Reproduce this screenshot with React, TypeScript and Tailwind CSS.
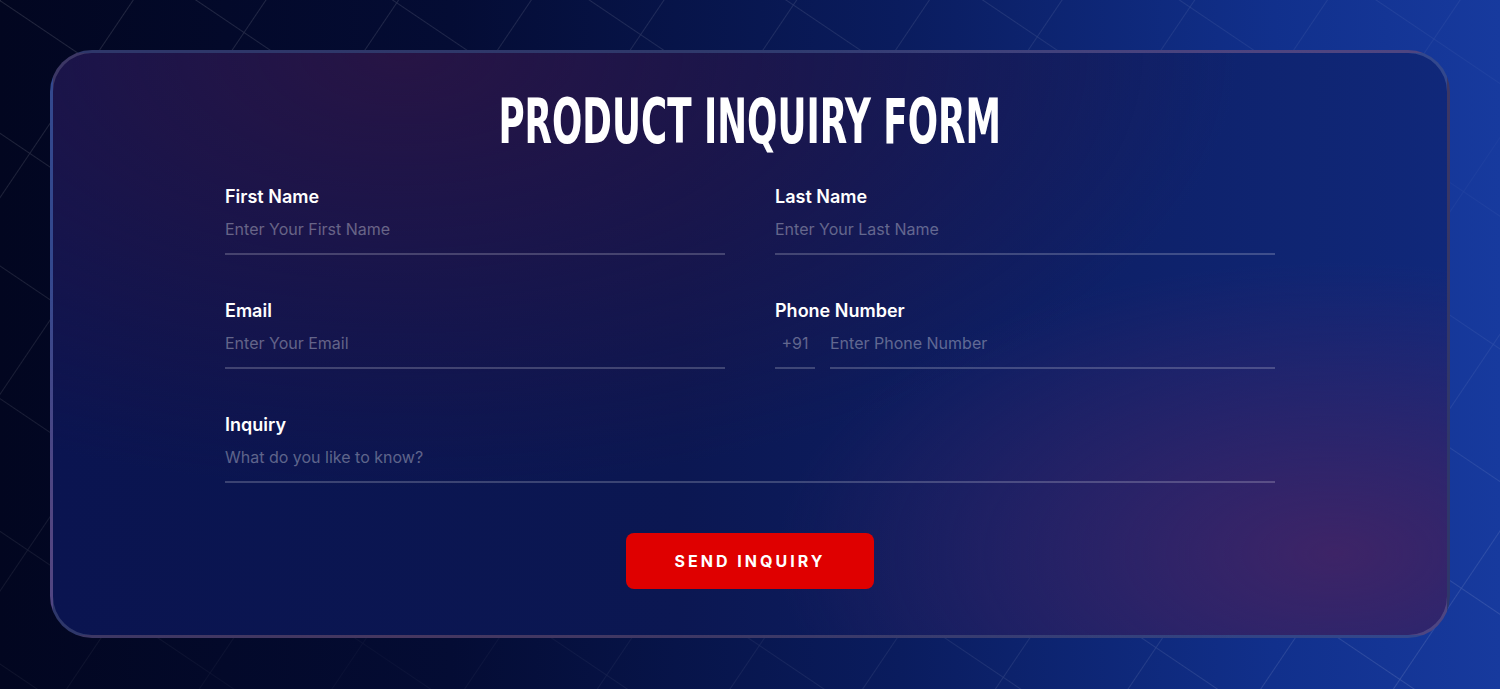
import { useState } from 'react';

const fieldCls =
  'block w-full bg-transparent pt-[6px] pb-[12px] text-base leading-6 text-white border-b-2 border-white/20 outline-none placeholder:text-white/35';

function Field({ label, placeholder, type = 'text' }: { label: string; placeholder: string; type?: string }) {
  const [value, setValue] = useState('');
  return (
    <label className="block">
      <span className="block text-lg leading-7 font-semibold text-white">{label}</span>
      <input type={type} value={value} onChange={(e) => setValue(e.target.value)} placeholder={placeholder} className={fieldCls} />
    </label>
  );
}

function GridLines() {
  return (
    <svg className="absolute inset-0 h-full w-full" preserveAspectRatio="none">
      <defs>
        <pattern id="diag" width="110" height="110" patternUnits="userSpaceOnUse" patternTransform="rotate(34)">
          <path d="M0 0H110M0 0V110" stroke="#ffffff" strokeWidth="1.5" fill="none" />
        </pattern>
        <linearGradient id="fade" x1="0" y1="0" x2="1" y2="1">
          <stop offset="0" stopColor="#fff" stopOpacity="1" />
          <stop offset="0.35" stopColor="#fff" stopOpacity="0.7" />
          <stop offset="0.6" stopColor="#fff" stopOpacity="0.2" />
          <stop offset="1" stopColor="#fff" stopOpacity="1" />
        </linearGradient>
        <mask id="m">
          <rect width="100%" height="100%" fill="url(#fade)" />
        </mask>
      </defs>
      <rect width="100%" height="100%" fill="url(#diag)" opacity="0.17" mask="url(#m)" />
    </svg>
  );
}

export default function App() {
  const [inquiry, setInquiry] = useState('');
  const [phone, setPhone] = useState('');

  return (
    <div className="relative min-h-screen overflow-hidden bg-[linear-gradient(90deg,#020620_0%,#040c34_30%,#0a1c5e_60%,#11308c_85%,#173a9e_100%)] font-['Inter','Liberation_Sans',sans-serif]">
      <GridLines />

      <div className="relative p-[50px]">
        <div className="h-[588px] rounded-[42px] border-[3px] border-[#ffffff26] bg-[radial-gradient(ellipse_60%_75%_at_25%_0%,rgba(40,20,68,0.95),transparent),radial-gradient(ellipse_40%_50%_at_92%_86%,rgba(64,36,102,0.95),transparent),linear-gradient(90deg,#0a1450_0%,#0b1752_45%,#10287a_100%)] px-[172px] pt-[38px]">
          <h1 className="text-center text-[62px] leading-none font-bold text-white font-['DejaVu_Sans_Condensed','Liberation_Sans_Narrow',sans-serif]">
            <span className="inline-block scale-x-[0.64]">PRODUCT INQUIRY FORM</span>
          </h1>

          <form className="mt-[30px] flex flex-col" onSubmit={(e) => e.preventDefault()}>
            <div className="grid grid-cols-2 gap-x-[50px] gap-y-[42px]">
              <Field label="First Name" placeholder="Enter Your First Name" />
              <Field label="Last Name" placeholder="Enter Your Last Name" />
              <Field label="Email" placeholder="Enter Your Email" type="email" />
              <div>
                <span className="block text-lg leading-7 font-semibold text-white">Phone Number</span>
                <div className="flex gap-[15px]">
                  <span className="block w-[40px] shrink-0 pt-[6px] pb-[12px] text-center text-base leading-6 text-white/35 border-b-2 border-white/20">+91</span>
                  <input
                    type="tel"
                    value={phone}
                    onChange={(e) => setPhone(e.target.value)}
                    placeholder="Enter Phone Number"
                    className={fieldCls + ' min-w-0'}
                  />
                </div>
              </div>
            </div>

            <label className="mt-[42px] block">
              <span className="block text-lg leading-7 font-semibold text-white">Inquiry</span>
              <input value={inquiry} onChange={(e) => setInquiry(e.target.value)} placeholder="What do you like to know?" className={fieldCls} />
            </label>

            <button
              type="submit"
              className="mx-auto mt-[50px] h-[56px] w-[248px] rounded-lg bg-[#df0000] text-base font-bold tracking-[3px] text-white"
            >
              SEND INQUIRY
            </button>
          </form>
        </div>
      </div>
    </div>
  );
}
